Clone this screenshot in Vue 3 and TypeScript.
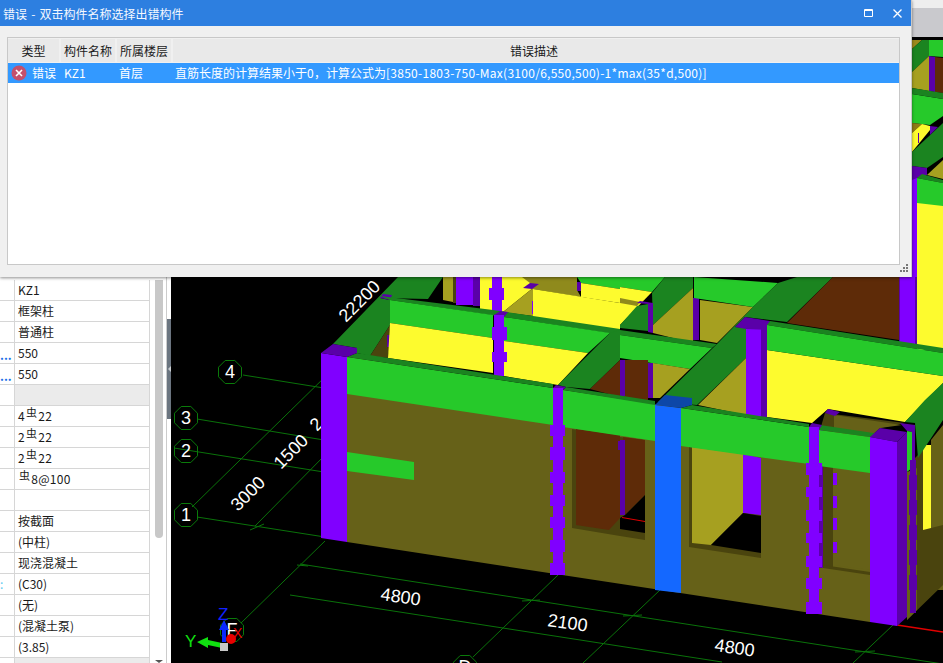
<template>
  <div class="page">
    <div class="topbar"><div class="topbar-gray"></div></div>

    <div class="body">
      <div class="props">
        <div
          v-for="(row, i) in rows"
          :key="i"
          class="prop-row"
          :class="{ group: row.group }"
        >
          <div class="prop-name" :class="row.mark">{{ row.mark === 'dots' ? '...' : row.mark ? ':' : '' }}</div>
          <div class="prop-value">
            <span v-if="row.steel" class="latin">{{ row.pre }}<span class="steel">虫</span>{{ row.steel }}</span>
            <template v-else>{{ row.value }}</template>
          </div>
        </div>
      </div>

      <div class="scroll">
        <div class="thumb"></div>
        <div class="arrow-down"></div>
      </div>

      <div class="splitter">
        <div class="handle"><span class="handle-arrow"></span></div>
      </div>

      <svg class="scene" viewBox="171 40 772 623" width="772" height="623">
        <rect x="171" y="40" width="772" height="623" fill="#000" />
        <line
          v-for="(l, i) in gridLines"
          :key="'l' + i"
          :x1="l[0]" :y1="l[1]" :x2="l[2]" :y2="l[3]"
          stroke="#0a720a"
        />
        <line x1="897" y1="625" x2="943" y2="632" stroke="#e00000" stroke-width="1.5" />
        <polygon
          v-for="b in bubbles"
          :key="'b' + b.t"
          :points="octagon(b.x, b.y)"
          fill="none"
          stroke="#0a7a0a"
        />
        <text
          v-for="b in bubbles"
          :key="'t' + b.t"
          :x="b.x" :y="b.y + 6"
          class="bubble-text"
        >{{ b.t }}</text>
        <text
          v-for="d in dims"
          :key="d.x + '-' + d.y"
          class="dim-text"
          :transform="`translate(${d.x} ${d.y}) rotate(${d.r})`"
        >{{ d.t }}</text>

        <polygon v-for="(p, i) in polys" :key="'p' + i" :points="p.pts" :fill="p.fill" />

        <!-- 坐标轴 -->
        <text x="218" y="620" class="axis-text" fill="#1020ff">Z</text>
        <polygon points="222,642 222,630 219,630 224,620 229,630 226,630 226,642" fill="#0a28ff" />
        <polygon points="222,643 208,640 208,637 197,642 208,648 208,645 222,648" fill="#10e010" />
        <text x="185" y="647" class="axis-text" fill="#10e010">Y</text>
        <circle cx="231" cy="639" r="5" fill="#e80000" />
        <text x="233" y="638" class="axis-text small" fill="#e80000">X</text>
        <rect x="220" y="643" width="8" height="8" fill="#c8c8c8" />
      </svg>
    </div>

    <div class="dialog">
      <div class="title">
        <span class="title-text">错误 - 双击构件名称选择出错构件</span>
        <svg class="win-btn max" width="9" height="8" viewBox="0 0 9 8">
          <path d="M.5.5h8v7h-8z M.5 1.5h8" fill="none" stroke="#fff" />
        </svg>
        <svg class="win-btn" width="9" height="9" viewBox="0 0 9 9">
          <path d="M.5.5l8 8M8.5.5l-8 8" fill="none" stroke="#fff" stroke-width="1.3" />
        </svg>
      </div>
      <div class="grid">
        <div class="grid-head">
          <div class="th c-type">类型</div>
          <div class="th c-name">构件名称</div>
          <div class="th c-floor">所属楼层</div>
          <div class="th c-desc">错误描述</div>
        </div>
        <div class="grid-row">
          <div class="c-type cell-type">
            <svg width="16" height="16" viewBox="0 0 16 16">
              <circle cx="8" cy="8" r="7.5" fill="#c4506c" />
              <path d="M5 5l6 6M11 5l-6 6" stroke="#fff" stroke-width="1.6" />
            </svg>
            <span>错误</span>
          </div>
          <div class="c-name td kz">KZ1</div>
          <div class="c-floor td">首层</div>
          <div class="c-desc td">直筋长度的计算结果小于<span class="latin">0</span>，计算公式为<span class="latin">[3850-1803-750-Max(3100/6,550,500)-1*max(35*d,500)]</span></div>
        </div>
      </div>
      <div class="grip">
        <i v-for="n in 6" :key="n" :class="'g' + n"></i>
      </div>
    </div>
  </div>
</template>

<script setup lang="ts">
interface Row {
  value?: string
  pre?: string
  steel?: string
  group?: boolean
  mark?: string
}

const rows: Row[] = [
  { value: 'KZ1' },
  { value: '框架柱' },
  { value: '普通柱' },
  { value: '550', mark: 'dots' },
  { value: '550', mark: 'dots' },
  { group: true },
  { pre: '4', steel: '22' },
  { pre: '2', steel: '22' },
  { pre: '2', steel: '22' },
  { pre: '', steel: '8@100' },
  { value: '' },
  { value: '按截面' },
  { value: '(中柱)' },
  { value: '现浇混凝土' },
  { value: '(C30)', mark: 'cyan' },
  { value: '(无)' },
  { value: '(混凝土泵)' },
  { value: '(3.85)' },
  { group: true },
]

const GREEN = '#26c92a'
const STRIP = '#1b8420'
const YELLOW = '#fdfb2e'
const OLIVE = '#666118'
const OLIVE2 = '#a6a020'
const OLIVE3 = '#8f8a1c'
const DARK = '#4a440e'
const BROWN = '#5e2b08'
const PURPLE = '#8000ff'
const DPURPLE = '#5a00a8'
const BLUE = '#1468ff'
const DBLUE = '#0d47a8'

const polys: { fill: string; pts: string }[] = []

function P(fill: string, pts: string) {
  polys.push({ fill, pts })
}

function R(fill: string, x1: number, y1: number, x2: number, y2: number) {
  polys.push({ fill, pts: `${x1},${y1} ${x2},${y1} ${x2},${y2} ${x1},${y2}` })
}

// 带凸起的柱子
function bumps(fill: string, x1: number, x2: number, ys: number[][]) {
  ys.forEach((y) => R(fill, x1, y[0], x2, y[1]))
}

// 后排
P(OLIVE2, '443,277 453,277 453,302 443,300')
R(DARK, 453, 277, 456, 303)
R(PURPLE, 456, 277, 473, 305)
R(DPURPLE, 473, 277, 480, 306)
R(YELLOW, 480, 277, 492, 312)
P(YELLOW, '502,277 533,277 533,288 503,312 502,312')
P(OLIVE2, '503,312 533,288 533,316')
P(OLIVE3, '522,277 577,277 577,290 581,297 533,289 530,283')
R(PURPLE, 492, 277, 502, 312)
R(PURPLE, 489, 288, 504, 300)
P(DPURPLE, '523,288 530,283 539,284 532,289')
R(PURPLE, 532, 301, 536, 314)
P(GREEN, '577,277 620,277 620,289 581,283')
R(DPURPLE, 577, 282, 581, 291)
P(YELLOW, '533,289 620,303 620,332 533,318')
P(YELLOW, '581,283 620,289 620,303 581,297')

P(GREEN, '620,277 665,277 652,292 620,287')
P(YELLOW, '620,287 652,292 620,325')
P(OLIVE3, '620,298 640,302 637,306 620,303')
P(STRIP, '665,277 693,277 693,288 653,325 652,293')
P(STRIP, '620,325 637,306 648,304 648,331 620,328')
P(OLIVE2, '653,325 693,288 693,343 653,333')
R(DPURPLE, 693, 298, 699, 340)
P(OLIVE2, '700,300 753,307 717,343 700,340')
P(GREEN, '694,277 778,283 753,307 694,298')
P(STRIP, '778,283 797,277 833,277 787,322 770,320 745,317 735,327 746,328 746,358 697,405 658,402 717,344 753,307')
P(DPURPLE, '637,303 640,301 653,303 653,333 648,332 648,304')

P(BROWN, '787,323 833,277 899,277 899,340')
R(PURPLE, 899, 277, 917, 345)
R(DPURPLE, 899, 277, 900, 345)
R(DPURPLE, 915, 277, 917, 345)
R(YELLOW, 917, 203, 943, 350)

// 对话框右侧露出部分
P('#9c8a1c', '912,40 922,40 912,49')
P(STRIP, '912,49 922,40 929,40 929,56 912,72')
P(GREEN, '929,40 943,40 943,57 929,56')
P(OLIVE2, '912,72 929,56 929,91 912,88')
P(DPURPLE, '929,56 935,57 935,92 929,91')
P(BROWN, '935,57 943,58 943,93 935,92')
P(GREEN, '912,94 943,99 943,116 930,125 912,123')
P(STRIP, '912,88 943,93 943,99 912,94')
P('#8f7a14', '912,123 922,124 912,133')
P(YELLOW, '912,133 922,124 930,126 930,130 912,152')
R(DPURPLE, 918, 133, 919, 143)
P(DPURPLE, '930,126 938,127 930,135')
P(STRIP, '912,152 943,123 943,157 927,168 912,166')
P(OLIVE2, '927,175 943,160 943,179 927,175')
P(DPURPLE, '912,166 927,168 927,175 917,178 917,277 912,277')
P(PURPLE, '912,180 917,178 917,277 912,277')
P(STRIP, '917,178 922,174 943,180 943,183')
P(GREEN, '917,178 943,183 943,206 917,203')

// 中排
P(STRIP, '333,344 398,277 443,277 428,299 380,298 390,300 390,325 370,356 357,353 357,348')
P(DARK, '390,325 370,356 388,358')
R(DPURPLE, 387, 335, 391, 347)
P(DPURPLE, '380,298 383,294 392,295 390,300')
P(STRIP, '380,296 493,310 620,329 620,335 504,317 390,300')
P(GREEN, '390,300 493,315 493,338 390,323')
P(YELLOW, '390,323 493,338 493,373 388,358')
P(GREEN, '504,317 610,333 588,353 504,341')
P(YELLOW, '504,341 588,353 558,385 504,376')
P(DPURPLE, '494,315 500,311 508,312 504,317')
R(PURPLE, 494, 315, 504, 376)
bumps(PURPLE, 492, 507, [[327, 340], [352, 362]])

P(STRIP, '558,385 610,333 620,330 620,360 590,389 566,387')
P(BROWN, '590,389 620,360 620,397')
P(STRIP, '620,330 717,344 712,348 620,335')
P(GREEN, '620,335 712,348 690,369 620,358')
R(BROWN, 623, 360, 648, 400)
R(DPURPLE, 620, 360, 625, 396)
R(DPURPLE, 648, 363, 653, 398)
P(OLIVE2, '653,363 690,369 660,398 653,398')
P(OLIVE2, '698,405 746,358 746,415')
R(PURPLE, 746, 328, 761, 418)
R(DPURPLE, 761, 328, 767, 418)
P(DPURPLE, '735,327 745,317 770,321 767,330 746,329')
P(YELLOW, '767,350 943,376 943,383 905,422 828,409 812,423 767,417')
P(STRIP, '770,321 943,348 943,353 767,325')
P(GREEN, '767,325 943,353 943,376 767,350')

// 右侧
P(OLIVE, '931,440 943,425 943,590 931,590')
R(YELLOW, 923, 445, 931, 533)
P('#000', '923,533 930,534 923,542')
P(DARK, '915,458 923,450 923,530 943,525 943,585 907,620')
P(STRIP, '925,400 943,383 943,420 918,458 915,423 905,422')

// 前墙
P(OLIVE, '347,357 870,437 870,622 347,542')
P(DARK, '825,413 905,423 880,428 870,437 820,430')
P(OLIVE, '834,415 902,425 880,428 870,437 870,480 834,480')
R(DARK, 823, 466, 833, 568)
P(OLIVE, '833,430 870,437 870,570 833,565')
P(DARK, '823,565 870,572 870,575 823,568')
R(DPURPLE, 819, 430, 823, 568)
bumps(PURPLE, 833, 837, [[473, 485], [496, 508], [518, 530], [542, 553]])
P(DPURPLE, '825,413 828,409 840,412 835,416')

// 门洞 1
P(DARK, '572,429 620,437 620,536 572,528')
P(BROWN, '576,429 620,435 620,518 609,530 576,525')
P(DARK, '620,437 645,440 645,540 620,536')
P(BROWN, '623,437 645,440 645,495 625,515 623,515')
P('#000', '645,495 645,533 620,529 620,518 625,515')
R(DPURPLE, 620, 440, 625, 515)
R(DPURPLE, 618, 441, 621, 450)
line(622, 517, 645, 521)

// 门洞 2
P(DARK, '689,440 692,447 761,458 761,558 689,547')
P(OLIVE2, '692,447 743,454 743,513 711,545 692,543')
P(PURPLE, '743,454 761,458 761,515 743,513')
P('#000', '743,513 761,516 761,553 711,545')

// 前梁
P(GREEN, '347,357 553,388 553,425 347,394')
P(GREEN, '563,390 655,404 655,441 563,427')
P(GREEN, '681,408 809,427 809,464 681,446')
P(GREEN, '819,430 870,437 870,473 819,466')
P(STRIP, '347,357 357,353 553,384 553,388')
P(STRIP, '563,390 566,387 655,401 655,405')
P(STRIP, '681,408 692,405 809,424 809,427')
P(STRIP, '819,430 820,425 880,434 870,437')
P(GREEN, '347,452 414,462 414,480 347,471')

// 前排柱
P(PURPLE, '321,353 347,357 347,542 321,538')
P(DPURPLE, '321,353 333,344 357,348 357,353 347,357')

P(DPURPLE, '553,388 556,385 566,387 563,390')
R(PURPLE, 553, 388, 563, 572)
bumps(PURPLE, 550, 565, [[425, 436], [447, 460], [472, 483], [495, 506], [517, 528], [540, 552], [563, 575]])

P(BLUE, '655,405 681,408 681,593 655,590')
P(DBLUE, '655,405 665,395 692,398 692,405 681,408')

P(DPURPLE, '809,427 812,423 822,425 819,430')
R(PURPLE, 809, 427, 819, 612)
bumps(PURPLE, 806, 822, [[463, 475], [487, 497], [510, 521], [533, 543], [556, 567], [578, 589], [602, 614]])

P(DPURPLE, '870,437 880,428 907,432 897,442')
P(PURPLE, '870,437 897,442 897,626 870,622')
P(DPURPLE, '897,442 907,432 907,617 897,626')
P(DPURPLE, '900,423 915,425 915,465 912,468 912,432 907,431')
P(GREEN, '907,431 912,432 912,468 907,472')
P(OLIVE, '907,472 917,468 917,610 907,620')
R(DPURPLE, 910, 460, 916, 613)
bumps(DPURPLE, 909, 917, [[475, 490], [500, 515], [525, 540], [550, 565], [575, 590]])

function line(x1: number, y1: number, x2: number, y2: number) {
  polys.push({ fill: '#e00000', pts: `${x1},${y1} ${x2},${y2} ${x2},${y2 + 1} ${x1},${y1 + 1}` })
}

const gridLines: number[][] = [
  [197, 517, 325, 537],
  [243, 375, 330, 389],
  [197, 419, 330, 441],
  [174, 448, 330, 473],
  [192, 507, 330, 372],
  [255, 526, 330, 450],
  [250, 530, 264, 524],
  [241, 623, 325, 541],
  [300, 564, 943, 664],
  [290, 595, 722, 662],
  [297, 565, 308, 566],
  [558, 575, 473, 657],
  [660, 590, 583, 663],
  [893, 625, 853, 663],
  [522, 601, 540, 600],
  [623, 616, 642, 615],
  [855, 652, 875, 651],
]

const bubbles = [
  { t: '4', x: 230, y: 372 },
  { t: '3', x: 186, y: 418 },
  { t: '2', x: 186, y: 451 },
  { t: '1', x: 186, y: 515 },
  { t: 'D', x: 465, y: 667 },
  { t: 'F', x: 232, y: 630 },
]

const dims = [
  { t: '3000', x: 238, y: 512, r: -45 },
  { t: '1500', x: 281, y: 470, r: -45 },
  { t: '2', x: 317, y: 432, r: -45 },
  { t: '22200', x: 346, y: 323, r: -45 },
  { t: '4800', x: 380, y: 600, r: 8 },
  { t: '2100', x: 547, y: 626, r: 8 },
  { t: '4800', x: 714, y: 651, r: 8 },
]

function octagon(cx: number, cy: number): string {
  const pts: string[] = []
  for (let i = 0; i < 8; i++) {
    const a = ((i + 0.5) * Math.PI) / 4
    pts.push(`${(cx + 12.5 * Math.cos(a)).toFixed(1)},${(cy + 12.5 * Math.sin(a)).toFixed(1)}`)
  }
  return pts.join(' ')
}
</script>

<style>
html,
body {
  margin: 0;
  overflow: hidden;
}
</style>

<style scoped>
.page {
  position: relative;
  width: 943px;
  height: 663px;
  overflow: hidden;
  background: #fff;
  font-family: "Noto Sans CJK SC", "Liberation Sans", sans-serif;
  font-size: 12px;
  color: #1a1a1a;
  display: flex;
  flex-direction: column;
}

.topbar {
  height: 40px;
  flex: none;
  padding-top: 8px;
  box-sizing: border-box;
  background: #eeeeee;
  border-bottom: 3px solid #000;
}

.topbar-gray {
  height: 29px;
  background: #c9c9cd;
}

.body {
  flex: 1;
  display: flex;
  min-height: 0;
}

.props {
  width: 150px;
  flex: none;
  padding-top: 240px;
}

.prop-row {
  height: 21px;
  box-sizing: border-box;
  display: flex;
  border-bottom: 1px solid #d6d6d6;
  border-right: 1px solid #d6d6d6;
  line-height: 20px;
}

.prop-row.group {
  background: #ebebeb;
}

.prop-name {
  width: 14px;
  flex: none;
  border-right: 1px solid #d6d6d6;
  background: #fff;
  color: #1a6fe8;
  font-weight: 700;
  line-height: 23px;
  overflow: hidden;
}

.prop-name.cyan {
  color: #5cc8f0;
  line-height: 20px;
  font-weight: 400;
}

.prop-value {
  padding-left: 3px;
  white-space: nowrap;
}

.latin {
  letter-spacing: 0.27px;
}

.steel {
  font-size: 11px;
  margin: 0 1px;
  position: relative;
  top: -4px;
}

.scroll {
  width: 16px;
  flex: none;
  padding-top: 240px;
  display: flex;
  flex-direction: column;
  border-right: 1px solid #cccccc;
}

.thumb {
  width: 8px;
  height: 258px;
  margin-left: 5px;
  background: #c8c8c8;
  border-radius: 0 0 4px 4px;
}

.arrow-down {
  margin-top: auto;
  margin-left: 5px;
  width: 0;
  height: 0;
  border-left: 4px solid transparent;
  border-right: 4px solid transparent;
  border-top: 3px solid #555;
}

.splitter {
  width: 4px;
  flex: none;
  padding-top: 279px;
}

.handle {
  height: 100px;
  background: #6b7580;
  display: flex;
  align-items: center;
  justify-content: center;
}

.handle-arrow {
  width: 0;
  height: 0;
  border-top: 3px solid transparent;
  border-bottom: 3px solid transparent;
  border-right: 3px solid #c8ccd0;
}

.scene {
  display: block;
  flex: none;
}

.bubble-text {
  fill: #fff;
  font-family: "Liberation Sans", sans-serif;
  font-size: 18px;
  text-anchor: middle;
}

.dim-text {
  fill: #fff;
  font-family: "Liberation Sans", sans-serif;
  font-size: 18px;
}

.axis-text {
  font-family: "Liberation Sans", sans-serif;
  font-size: 17px;
}

.axis-text.small {
  font-size: 14px;
}

.dialog {
  position: absolute;
  left: 0;
  top: 0;
  width: 912px;
  height: 277px;
  background: #f0f0f0;
  border-right: 1px solid #c8c8c8;
  box-sizing: border-box;
  box-shadow: 0 1px 3px rgba(0, 0, 0, 0.45);
  display: flex;
  flex-direction: column;
}

.title {
  height: 26px;
  flex: none;
  background: #2d7fe0;
  color: #f4f8ff;
  display: flex;
  align-items: center;
  padding: 0 9px 0 3px;
}

.title-text {
  flex: 1;
  word-spacing: 1.5px;
}

.win-btn.max {
  margin-right: 20px;
}

.grid {
  position: absolute;
  left: 7px;
  top: 37px;
  width: 893px;
  height: 228px;
  box-sizing: border-box;
  border: 1px solid #c8c8c8;
  background: #fff;
}

.grid-head {
  height: 25px;
  display: flex;
  background: #f0f0f0;
  padding-top: 1px;
  box-sizing: border-box;
}

.th {
  height: 23px;
  line-height: 23px;
  text-align: center;
  background: #e9e9e9;
  box-sizing: border-box;
  margin-right: 2px;
}

.th.c-desc {
  margin-right: 0;
  padding-right: 4px;
}

.c-type {
  width: 51px;
  flex: none;
}

.c-name {
  width: 54px;
  flex: none;
}

.c-floor {
  width: 54px;
  flex: none;
}

.c-desc {
  flex: 1;
}

.grid-row {
  height: 20px;
  background: #3399ff;
  color: #fff;
  display: flex;
  align-items: center;
  line-height: 20px;
}

.cell-type {
  display: flex;
  align-items: center;
  gap: 5px;
  padding-left: 3px;
  box-sizing: border-box;
  margin-right: 2px;
}

.td {
  margin-right: 2px;
  padding-left: 2px;
  box-sizing: border-box;
  white-space: nowrap;
}

.td.kz {
  padding-left: 3px;
}

.grid-row .c-desc {
  margin-right: 0;
}

.grip {
  position: absolute;
  right: 3px;
  bottom: 4px;
  width: 9px;
  height: 9px;
}

.grip i {
  position: absolute;
  width: 2px;
  height: 2px;
  background: #777;
}

.g1 { right: 0; top: 0; }
.g2 { right: 3px; top: 3px; }
.g3 { right: 0; top: 3px; }
.g4 { right: 6px; top: 6px; }
.g5 { right: 3px; top: 6px; }
.g6 { right: 0; top: 6px; }
</style>
